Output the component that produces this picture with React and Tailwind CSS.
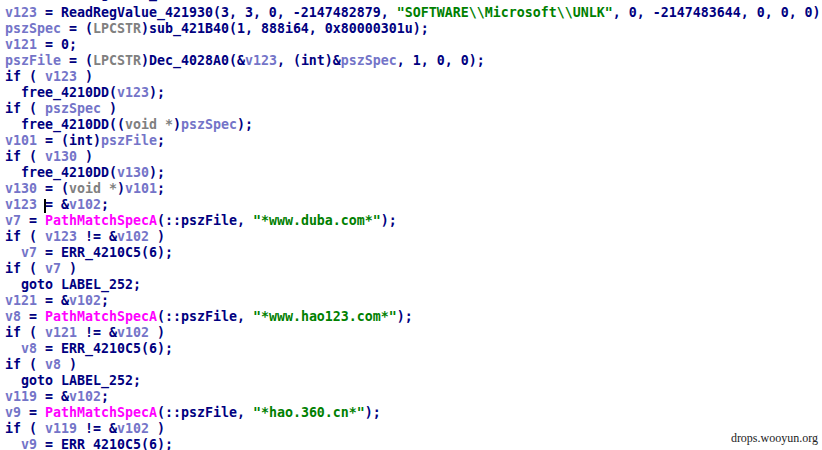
import React from "react";

const C = {
  n: "text-[#000080]",
  v: "text-[#7474c8]",
  g: "text-[#808080]",
  s: "text-[#008000]",
  m: "text-[#ff00ff]",
};

const L = (...segs) => segs;

const lines = [
  L(["v122", "v"], [" = ", "n"], ["GetRegValue_4219A0", "n"], ["(", "n"], ["v125", "v"], [", ", "n"], ["v124", "v"], [");", "n"]),
  L(["v123", "v"], [" = ReadRegValue_421930(3, 3, 0, -2147482879, ", "n"], ["\"SOFTWARE\\\\Microsoft\\\\UNLK\"", "s"], [", 0, -2147483644, 0, 0, 0)", "n"]),
  L(["pszSpec", "v"], [" = (", "n"], ["LPCSTR", "g"], [")sub_421B40(1, 888i64, 0x80000301u);", "n"]),
  L(["v121", "v"], [" = 0;", "n"]),
  L(["pszFile", "v"], [" = (", "n"], ["LPCSTR", "g"], [")Dec_4028A0(&", "n"], ["v123", "v"], [", (int)&", "n"], ["pszSpec", "v"], [", 1, 0, 0);", "n"]),
  L(["if ( ", "n"], ["v123", "v"], [" )", "n"]),
  L(["  free_4210DD(", "n"], ["v123", "v"], [");", "n"]),
  L(["if ( ", "n"], ["pszSpec", "v"], [" )", "n"]),
  L(["  free_4210DD((", "n"], ["void *", "g"], [")", "n"], ["pszSpec", "v"], [");", "n"]),
  L(["v101", "v"], [" = (int)", "n"], ["pszFile", "v"], [";", "n"]),
  L(["if ( ", "n"], ["v130", "v"], [" )", "n"]),
  L(["  free_4210DD(", "n"], ["v130", "v"], [");", "n"]),
  L(["v130", "v"], [" = (", "n"], ["void *", "g"], [")", "n"], ["v101", "v"], [";", "n"]),
  L(["v123", "v"], [" ", "n"], ["", "cursor"], ["= &", "n"], ["v102", "v"], [";", "n"]),
  L(["v7", "v"], [" = ", "n"], ["PathMatchSpecA", "m"], ["(::pszFile, ", "n"], ["\"*www.duba.com*\"", "s"], [");", "n"]),
  L(["if ( ", "n"], ["v123", "v"], [" != &", "n"], ["v102", "v"], [" )", "n"]),
  L(["  ", "n"], ["v7", "v"], [" = ERR_4210C5(6);", "n"]),
  L(["if ( ", "n"], ["v7", "v"], [" )", "n"]),
  L(["  goto LABEL_252;", "n"]),
  L(["v121", "v"], [" = &", "n"], ["v102", "v"], [";", "n"]),
  L(["v8", "v"], [" = ", "n"], ["PathMatchSpecA", "m"], ["(::pszFile, ", "n"], ["\"*www.hao123.com*\"", "s"], [");", "n"]),
  L(["if ( ", "n"], ["v121", "v"], [" != &", "n"], ["v102", "v"], [" )", "n"]),
  L(["  ", "n"], ["v8", "v"], [" = ERR_4210C5(6);", "n"]),
  L(["if ( ", "n"], ["v8", "v"], [" )", "n"]),
  L(["  goto LABEL_252;", "n"]),
  L(["v119", "v"], [" = &", "n"], ["v102", "v"], [";", "n"]),
  L(["v9", "v"], [" = ", "n"], ["PathMatchSpecA", "m"], ["(::pszFile, ", "n"], ["\"*hao.360.cn*\"", "s"], [");", "n"]),
  L(["if ( ", "n"], ["v119", "v"], [" != &", "n"], ["v102", "v"], [" )", "n"]),
  L(["  ", "n"], ["v9", "v"], [" = ERR_4210C5(6);", "n"]),
];

export default function App() {
  return (
    <div className="relative w-[822px] h-[450px] overflow-hidden bg-white">
      <div
        className="-mt-[11px] pl-[5px] font-bold text-[13.29px] leading-[16px] whitespace-pre"
        style={{ fontFamily: '"DejaVu Sans Mono", "Liberation Mono", monospace' }}
      >
        {lines.map((segs, i) => (
          <div key={i} className={i === 0 ? "h-[16px] relative -top-[3px]" : "h-[16px]"}>
            {segs.map(([t, k], j) =>
              k === "cursor" ? (
                <span key={j} className="relative inline-block w-0 h-[16px] align-top">
                  <span className="absolute left-[-1px] top-[2px] w-[2px] h-[14px] bg-black" />
                </span>
              ) : (
                <span key={j} className={C[k]}>
                  {t}
                </span>
              )
            )}
          </div>
        ))}
      </div>
      <div
        className="absolute right-[4px] bottom-[3px] text-[12px] text-[#222]"
        style={{ fontFamily: '"Liberation Serif", serif' }}
      >
        drops.wooyun.org
      </div>
    </div>
  );
}
